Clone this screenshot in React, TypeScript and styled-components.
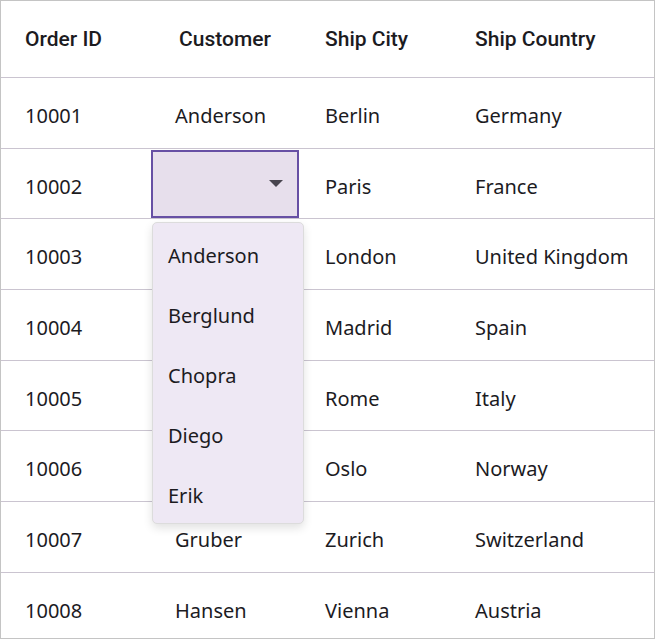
import React from 'react';
import styled, { createGlobalStyle } from 'styled-components';

const GlobalStyle = createGlobalStyle`
    html, body {
        margin: 0;
        padding: 0;
        background: #ffffff;
    }
`;

const SGrid = styled.div`
    position: relative;
    box-sizing: border-box;
    width: 655px;
    height: 639px;
    border: 1px solid #c4c4c4;
    overflow: hidden;
    background: #ffffff;
    color: #1c1b1f;
`;

const SHeaderRow = styled.div`
    display: grid;
    grid-template-columns: 149px 150px 150px 1fr;
    box-sizing: border-box;
    height: 77px;
    border-bottom: 1px solid #cac4d0;
`;

const SHeaderCell = styled.div<{ center?: boolean; first?: boolean }>`
    display: flex;
    align-items: center;
    justify-content: ${({ center }) => (center ? 'center' : 'flex-start')};
    padding-left: ${({ center, first }) => (center ? '0' : first ? '24px' : '25px')};
    font-family: Roboto, 'Liberation Sans', sans-serif;
    font-weight: 500;
    font-size: 21px;
    white-space: nowrap;
`;

const SRow = styled.div`
    display: grid;
    grid-template-columns: 149px 150px 150px 1fr;
    box-sizing: border-box;
    height: 70.7px;
    border-bottom: 1px solid #cac4d0;
`;

const SCell = styled.div<{ first?: boolean }>`
    display: flex;
    align-items: center;
    padding-top: 5px;
    padding-left: ${({ first }) => (first ? '24px' : '25px')};
    font-family: 'Noto Sans', 'Open Sans', sans-serif;
    font-size: 20px;
    white-space: nowrap;
`;

const SEditCell = styled.div`
    position: relative;
    box-sizing: border-box;
    padding: 1px 1px 0 1px;
`;

const SCombo = styled.div`
    box-sizing: border-box;
    height: 100%;
    border: 2px solid #6750a4;
    background: #e7dfec;
    display: flex;
    align-items: center;
    justify-content: flex-end;
    padding-right: 14px;
`;

const SPopup = styled.div`
    position: absolute;
    top: 73px;
    left: 2px;
    width: 152px;
    box-sizing: border-box;
    background: #eee8f4;
    border: 1px solid #dcdcdc;
    border-radius: 5px;
    box-shadow: 0 4px 10px rgba(0, 0, 0, 0.12);
    z-index: 10;
`;

const SOption = styled.div`
    height: 60px;
    display: flex;
    align-items: center;
    padding-top: 5px;
    box-sizing: border-box;
    padding-left: 15px;
    font-family: 'Noto Sans', 'Open Sans', sans-serif;
    font-size: 20px;
    color: #1c1b1f;
`;

type Order = { id: number; customer: string; city: string; country: string };

const orders: Order[] = [
    { id: 10001, customer: 'Anderson', city: 'Berlin', country: 'Germany' },
    { id: 10002, customer: 'Berglund', city: 'Paris', country: 'France' },
    { id: 10003, customer: 'Chopra', city: 'London', country: 'United Kingdom' },
    { id: 10004, customer: 'Diego', city: 'Madrid', country: 'Spain' },
    { id: 10005, customer: 'Erik', city: 'Rome', country: 'Italy' },
    { id: 10006, customer: 'Fischer', city: 'Oslo', country: 'Norway' },
    { id: 10007, customer: 'Gruber', city: 'Zurich', country: 'Switzerland' },
    { id: 10008, customer: 'Hansen', city: 'Vienna', country: 'Austria' },
];

const customers = ['Anderson', 'Berglund', 'Chopra', 'Diego', 'Erik'];

const ArrowDown = () => (
    <svg width="14" height="8" viewBox="0 0 14 8">
        <path d="M0 0 L14 0 L7 7 Z" fill="#49454f" />
    </svg>
);

const App = () => {
    const editingId = 10002;

    return (
        <>
            <GlobalStyle />
            <SGrid>
                <SHeaderRow>
                    <SHeaderCell first>Order ID</SHeaderCell>
                    <SHeaderCell center>Customer</SHeaderCell>
                    <SHeaderCell>Ship City</SHeaderCell>
                    <SHeaderCell>Ship Country</SHeaderCell>
                </SHeaderRow>
                {orders.map((o) => (
                    <SRow key={o.id}>
                        <SCell first>{o.id}</SCell>
                        {o.id === editingId ? (
                            <SEditCell>
                                <SCombo>
                                    <ArrowDown />
                                </SCombo>
                                <SPopup>
                                    {customers.map((c) => (
                                        <SOption key={c}>{c}</SOption>
                                    ))}
                                </SPopup>
                            </SEditCell>
                        ) : (
                            <SCell>{o.customer}</SCell>
                        )}
                        <SCell>{o.city}</SCell>
                        <SCell>{o.country}</SCell>
                    </SRow>
                ))}
            </SGrid>
        </>
    );
};

export default App;
